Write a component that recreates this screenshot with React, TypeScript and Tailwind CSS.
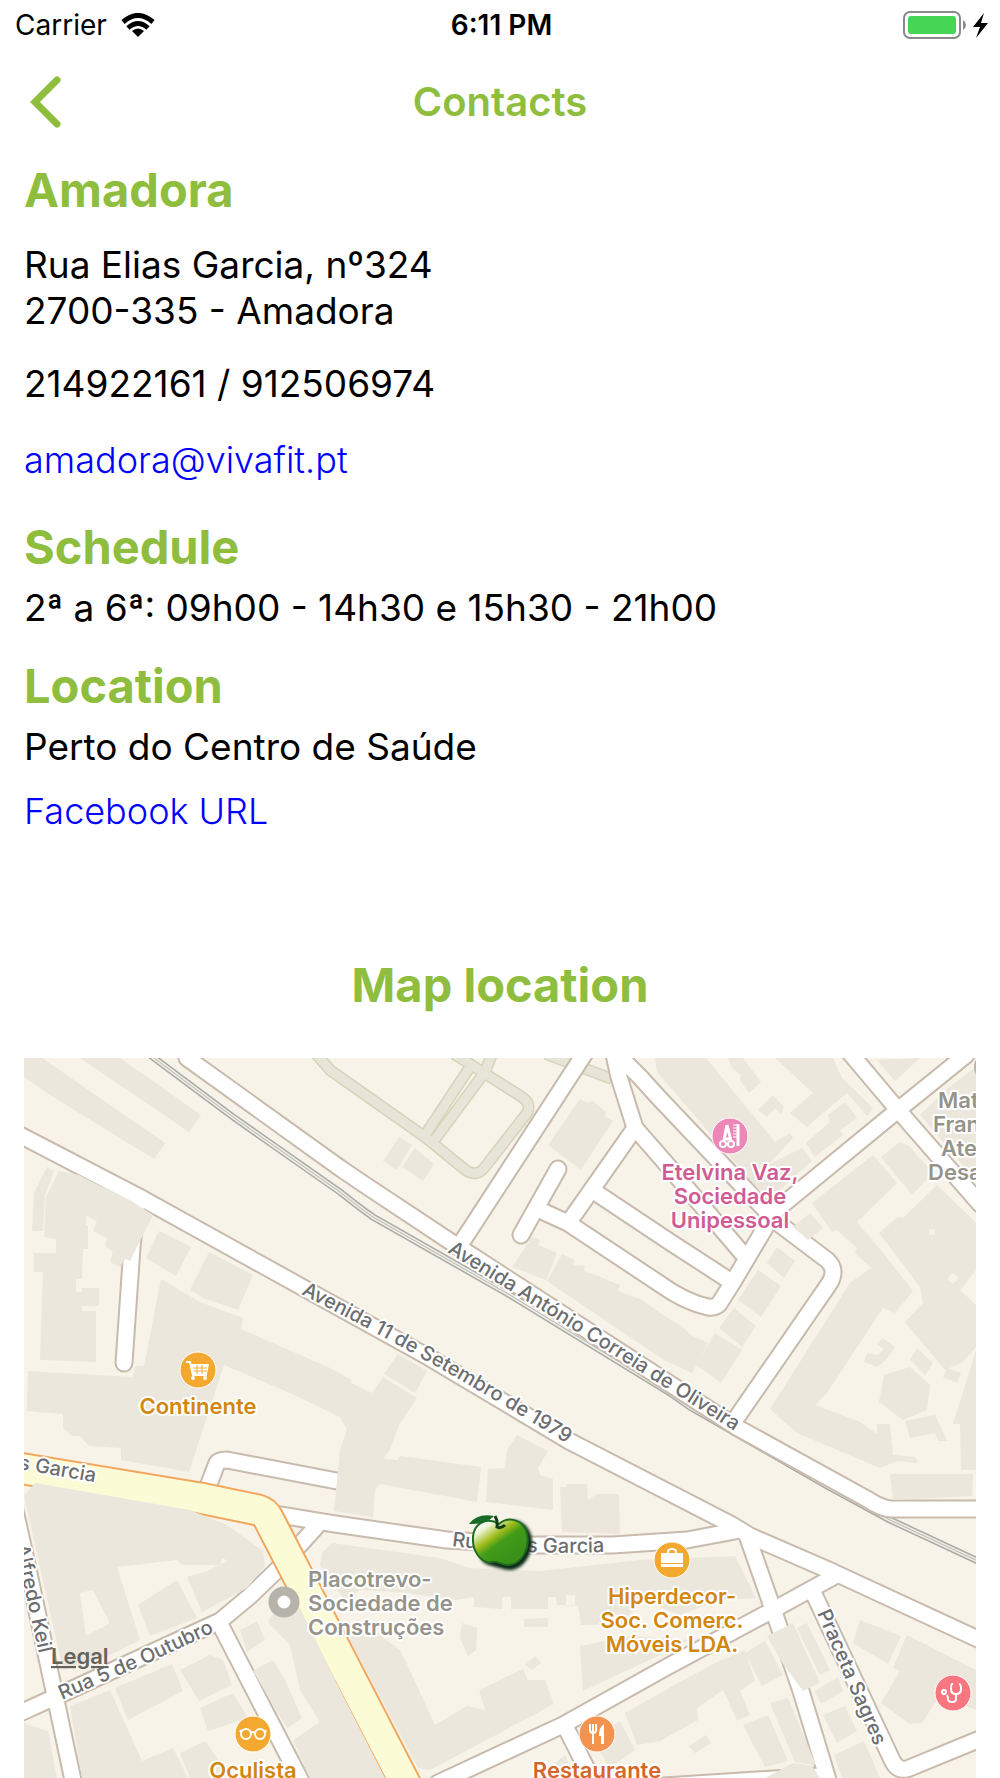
import type { ReactNode } from 'react';

// Centre lines of the streets, in map coordinates
const STREETS = [
  'M187 1058 L340 1168 L365 1185 L454 1244 L738 1428 L867 1499 Q882 1509 892 1509 H980',
  'M20 1135 L143 1199 L300 1286 L430 1358 L569 1441 L732 1525 L750 1536 L833 1572 L980 1640',
  'M585 1053 L460 1245',
  'M613 1050 L619 1077 L635 1128 L663 1160 L742 1253',
  'M613 1050 L640 1077 L660 1099 L770 1215',
  'M966 1055 L898 1110 L775 1211 L733 1282 L719 1304 Q715 1308 708 1307 Q685 1302 660 1284 L568 1223 L544 1212',
  'M558 1169 L521 1235',
  'M635 1128 L569 1222',
  'M598 1194 L670 1242 L727 1279',
  'M850 1053 L898 1110 L980 1204',
  'M770 1217 L827 1260 Q838 1270 829 1284 L735 1420',
  'M137 1200 L132 1247 L124 1363',
  'M209 1484 L217 1463 Q219 1460 227 1460 L342 1482',
  'M280 1515 L335 1524 L447 1540 L530 1545 L613 1545 L687 1540 L735 1531',
  'M316 1527 L277 1570 L250 1596 L220 1621 L53 1698 L20 1713',
  'M15 1510 L25 1555 L57 1705 L74 1785',
  'M222 1628 L302 1783',
  'M438 1783 L563 1725 L665 1668 L773 1610 L835 1576',
  'M565 1726 L594 1783',
  'M748 1538 L775 1615 L801 1691 L829 1783',
  'M664 1786 L820 1776',
  'M812 1590 L892 1760 Q897 1771 907 1769 L980 1739',
];

const PARK_PATHS = [
  'M316 1054 L330 1070 L425 1137 L463 1168 Q476 1179 485 1167 L527 1113 Q532 1104 522 1097 L454 1054',
  'M470 1067 L425 1135',
  'M492 1054 L485 1072 L433 1142',
  'M546 1054 L612 1079',
];

const RAILWAY =
  'M150 1055 L233 1117 L340 1192 Q360 1208 373 1217 L510 1295 L670 1393 L690 1407 L827 1486 L890 1520 L980 1562';

const MAIN_ROAD = 'M18 1468 L200 1498 L258 1510 Q265 1512 268 1518 L406 1785';

const BUILDINGS = [
  '24,1058 42,1058 165,1143 154,1159 50,1095 24,1077',
  '80,1058 120,1058 201,1115 189,1132',
  '47,1167 54,1171 45,1195 43,1231 32,1231 34,1193',
  '59,1171 79,1175 92,1182 130,1200 153,1215 130,1261 125,1259 120,1267 110,1262 113,1252 105,1246 107,1238 93,1231 97,1221 86,1215 86,1225 88,1226 88,1249 83,1249 82,1279 76,1279 76,1292 82,1292 82,1288 99,1288 99,1306 82,1306 82,1311 96,1311 96,1362 40,1360 43,1272 34,1272 34,1253 56,1253 56,1239 44,1237 46,1197',
  '159,1231 191,1247 176,1276 146,1258',
  '209,1252 253,1275 238,1310 203,1298 190,1290',
  '161,1279 200,1302 243,1318 241,1329 330,1368 352,1380 351,1383 372,1393 383,1377 417,1398 399,1425 390,1450 383,1459 398,1460 400,1456 481,1467 477,1502 380,1484 375,1490 373,1517 334,1511 340,1450 347,1430 340,1417 290,1393 224,1365 206,1420 189,1472 121,1460 121,1448 89,1446 80,1436 72,1436 63,1428 63,1414 27,1411 28,1371 133,1377 135,1366 144,1366',
  '398,1354 427,1371 415,1393 384,1374',
  '399,1137 412,1145 397,1170 383,1161',
  '415,1148 434,1164 423,1181 402,1167',
  '580,1099 588,1103 593,1101 606,1112 605,1116 613,1121 581,1170 548,1145',
  '532,1237 540,1240 538,1245 557,1253 546,1280 512,1267',
  '562,1254 575,1260 573,1265 585,1266 584,1271 598,1276 620,1285 618,1291 640,1299 663,1315 680,1325 691,1335 708,1343 692,1373 664,1360 547,1281',
  '655,1058 706,1058 775,1142 790,1133 793,1138 768,1165 802,1148 812,1161 768,1201 657,1072',
  '728,1058 743,1058 761,1082 749,1093 740,1080 741,1075 732,1068',
  '773,1095 784,1107 781,1114 775,1108 767,1117 758,1110',
  '775,1058 833,1058 842,1078 873,1108 867,1116 847,1093 817,1118 807,1127 790,1113 813,1093',
  '845,1102 857,1118 840,1130 843,1135 815,1157 806,1143 830,1122 828,1115',
  '877,1060 920,1058 895,1081',
  '976,1067 976,1180 950,1150 920,1115 948,1088',
  '881,1157 900,1142 910,1147 933,1173 912,1195',
  '812,1203 873,1155 897,1183 857,1222 888,1259 913,1291 895,1313 883,1308 827,1393 815,1405 860,1422 877,1434 877,1424 890,1424 893,1455 915,1457 918,1463 897,1461 880,1468 797,1433 770,1409 850,1283 871,1268 855,1253 857,1248 837,1230 832,1232',
  '879,1233 898,1217 903,1218 937,1185 976,1223 976,1270 960,1290 976,1305 976,1347 963,1362 945,1370 905,1322 923,1303 920,1287',
  '777,1247 795,1261 784,1278 767,1263',
  '758,1270 781,1286 761,1317 738,1300',
  '734,1308 756,1326 742,1347 719,1328',
  '715,1333 742,1350 721,1383 696,1365',
  '810,1213 823,1228 808,1240 793,1227',
  '884,1375 910,1367 930,1385 927,1410 903,1420 879,1402',
  '917,1348 933,1363 925,1375 910,1360',
  '882,1338 895,1347 886,1360 877,1367 864,1362 867,1353 878,1355 884,1349 877,1344',
  '976,1350 976,1470 961,1470 960,1424 953,1424',
  '905,1421 935,1415 947,1441 938,1441 935,1433 910,1438',
  '947,1368 961,1373 957,1383 943,1377',
  '890,1474 973,1474 972,1496 893,1500',
  '507,1450 517,1435 548,1451 538,1468 540,1475 553,1479 553,1510 486,1502 488,1469 505,1468',
  '560,1487 566,1487 567,1484 587,1484 588,1500 597,1494 619,1494 620,1534 562,1532',
  '322,1553 332,1543 440,1558 470,1568 540,1571 640,1560 735,1556 756,1598 720,1600 680,1615 643,1600 620,1625 581,1625 578,1606 557,1605 556,1597 548,1597 548,1609 511,1609 511,1597 502,1597 502,1609 474,1607 474,1597 455,1600 400,1592 360,1590 345,1600 320,1566',
  '462,1623 477,1628 476,1650 468,1656 460,1638',
  '524,1619 548,1618 548,1627 524,1627',
  '525,1665 535,1656 541,1663 532,1670',
  '580,1646 630,1636 690,1640 660,1655 583,1691',
  '350,1640 358,1620 400,1650 412,1675 435,1725 467,1706 485,1710 479,1690 523,1669 528,1680 545,1680 554,1704 430,1770 418,1768',
  '537,1778 565,1755 575,1778',
  '625,1713 678,1683 715,1663 745,1650 755,1681 740,1691 750,1715 737,1720 723,1690 697,1708 698,1720 660,1741 637,1745',
  '620,1721 635,1750 610,1768 592,1740',
  '765,1641 783,1675 762,1686 745,1653',
  '767,1636 793,1623 820,1683 803,1691 783,1664',
  '807,1623 830,1670 820,1675 797,1628',
  '838,1677 843,1691 821,1704 815,1691',
  '845,1706 857,1731 837,1743 823,1715',
  '864,1741 880,1778 842,1778 834,1755',
  '860,1620 901,1636 888,1664 853,1643',
  '907,1635 976,1670 976,1710 940,1695 922,1723 910,1724 881,1703 900,1671 893,1668',
  '770,1703 788,1698 816,1765 795,1762',
  '743,1725 768,1715 788,1761 765,1767',
  '689,1746 706,1735 711,1743 695,1753',
  '765,1778 793,1763 812,1766 820,1778',
  '35,1483 190,1510 227,1525 263,1551 265,1566 247,1588 202,1612 187,1577 190,1576 205,1572 228,1561 222,1558 220,1565 182,1565 177,1560 117,1567 140,1640 110,1655 63,1670 24,1496',
  '138,1605 177,1580 197,1618 150,1636',
  '70,1706 110,1690 142,1761 173,1748 188,1778 82,1778',
  '115,1688 172,1664 183,1691 128,1720',
  '180,1670 210,1655 223,1660 232,1685 199,1701',
  '200,1708 233,1693 248,1718 208,1731',
  '24,1723 48,1731 57,1778 24,1778',
  '180,1753 205,1741 217,1758 225,1778 190,1778',
  '240,1630 257,1621 265,1640 247,1652',
  '268,1622 280,1602 300,1608 340,1690 385,1778 310,1778 293,1740 320,1722 300,1690 290,1645',
  '253,1671 273,1660 285,1680 302,1718 287,1728 270,1700',
];

interface PoiProps {
  x: number;
  y: number;
  color: string;
  textColor: string;
  lines: string[];
  children: ReactNode;
}

function Poi({ x, y, color, textColor, lines, children }: PoiProps) {
  return (
    <g>
      <circle cx={x} cy={y} r={18} fill={color} stroke="#fff" />
      <g transform={`translate(${x} ${y})`}>{children}</g>
      {lines.map((line, i) => (
        <MapLabel key={line} x={x} y={y + 44 + i * 24} anchor="middle" color={textColor}>
          {line}
        </MapLabel>
      ))}
    </g>
  );
}

interface MapLabelProps {
  x: number;
  y: number;
  color: string;
  anchor?: 'start' | 'middle';
  children: string;
}

function MapLabel({ x, y, color, anchor = 'start', children }: MapLabelProps) {
  return (
    <text
      x={x}
      y={y}
      textAnchor={anchor}
      fill={color}
      stroke="#fff"
      strokeWidth={4}
      strokeLinejoin="round"
      paintOrder="stroke"
      className="text-[22px] font-semibold"
    >
      {children}
    </text>
  );
}

function StreetName({ id, d, children }: { id: string; d: string; children: string }) {
  return (
    <>
      <path id={id} d={d} fill="none" />
      <text
        fill="#6c6d70"
        stroke="#fff"
        strokeWidth={4}
        strokeLinejoin="round"
        paintOrder="stroke"
        className="text-[20px] font-medium"
      >
        <textPath href={`#${id}`}>{children}</textPath>
      </text>
    </>
  );
}

function ApplePin() {
  return (
    <g>
      <path
        d="M503 1523 C520 1514 534 1529 532 1545 C530 1561 518 1574 503 1569 C490 1565 484 1566 480 1557 Z"
        fill="#0c2a17"
        filter="url(#pin-shadow)"
      />
      <path
        d="M499 1524 C507 1517 520 1518 526 1530 C532 1548 521 1564 509 1565 C502 1566 497 1560 492 1562 C481 1564 472 1551 473 1537 C474 1522 488 1517 499 1524 Z"
        fill="url(#apple-skin)"
        stroke="#1d6b1f"
        strokeWidth={2}
      />
      <path d="M469 1524 Q477 1513 494 1516 Q486 1525 469 1524 Z" fill="#166b26" />
      <path d="M495 1516 Q498 1521 497 1527 Q501 1529 505 1525" fill="none" stroke="#123d18" strokeWidth={3} />
    </g>
  );
}

function LocationMap() {
  return (
    <svg
      viewBox="24 1058 952 720"
      role="img"
      aria-label="Map location"
      className="mt-[45px] block w-full overflow-hidden bg-[#f7f3e8]"
    >
      <defs>
        <linearGradient id="apple-skin" x1="0.1" y1="0.1" x2="0.7" y2="0.8">
          <stop offset="0" stopColor="#fff" />
          <stop offset="0.15" stopColor="#eef6d8" />
          <stop offset="0.42" stopColor="#a0bd1c" />
          <stop offset="0.62" stopColor="#429b18" />
          <stop offset="1" stopColor="#3a9218" />
        </linearGradient>
        <filter id="pin-shadow" x="-20%" y="-20%" width="140%" height="140%">
          <feGaussianBlur stdDeviation="1.4" />
        </filter>
      </defs>

      {/* Park paths */}
      <g fill="none" strokeLinejoin="round">
        {PARK_PATHS.map((d) => (
          <path key={d} d={d} stroke="#d5d3b9" strokeWidth={12} />
        ))}
        {PARK_PATHS.map((d) => (
          <path key={d} d={d} stroke="#e6e5d7" strokeWidth={9} />
        ))}
      </g>

      {/* Railway */}
      <g fill="none">
        <path d={RAILWAY} stroke="#a9a9a8" strokeWidth={7} />
        <path d={RAILWAY} stroke="#efeee2" strokeWidth={4} />
        <path d={RAILWAY} stroke="#b5b5b2" strokeWidth={1} />
      </g>

      {/* Streets: casing first, so that the junctions stay open */}
      <g fill="none" strokeLinecap="round" strokeLinejoin="round">
        {STREETS.map((d) => (
          <path key={d} d={d} stroke="#c8bbad" strokeWidth={19} />
        ))}
        {STREETS.map((d) => (
          <path key={d} d={d} stroke="#fff" strokeWidth={15} />
        ))}
        <path d={MAIN_ROAD} stroke="#f2a75e" strokeWidth={33} />
        <path d={MAIN_ROAD} stroke="#fbfbd6" strokeWidth={29} />
      </g>

      {/* Buildings */}
      <g fill="#ebe7dc">
        {BUILDINGS.map((points) => (
          <polygon key={points} points={points} />
        ))}
      </g>
      <g fill="#f7f3e8">
        <polygon points="80,1593 93,1590 110,1623 86,1636" />
        <polygon points="953,1273 959,1278 953,1284 947,1279" />
        <circle cx={932} cy={1232} r={3} />
        <rect x={566} y={1595} width={9} height={10} />
      </g>

      {/* Street names */}
      <StreetName id="street-correia" d="M447 1252 L583 1336 L760 1447">
        Avenida António Correia de Oliveira
      </StreetName>
      <StreetName id="street-setembro" d="M301 1294 Q433 1360 600 1464">
        Avenida 11 de Setembro de 1979
      </StreetName>
      <StreetName id="street-garcia" d="M452 1546 Q530 1556 630 1551">
        Rua Elias Garcia
      </StreetName>
      <StreetName id="street-garcia-west" d="M-56 1457 L24 1470 L140 1490">
        Rua Elias Garcia
      </StreetName>
      <StreetName id="street-outubro" d="M62 1700 L148 1663 L240 1620">
        Rua 5 de Outubro
      </StreetName>
      <StreetName id="street-keil" d="M6 1505 L52 1712">
        Rua Alfredo Keil
      </StreetName>
      <StreetName id="street-sagres" d="M817 1613 L890 1782">
        Praceta Sagres
      </StreetName>

      {/* Places */}
      <Poi x={198} y={1370} color="#f3a92f" textColor="#d18710" lines={['Continente']}>
        <path d="M-12 -8 H-8 L-5 5 H9" fill="none" stroke="#fff" strokeWidth={2} />
        <path d="M-7 -6 H11 L9 4 H-5 Z" fill="#fff" />
        <path d="M-5 -2 H9 M-4 1 H9 M-1 -5 V4 M4 -5 V4" stroke="#f3a92f" strokeWidth={1} />
        <circle cx={-5} cy={8} r={2} fill="#fff" />
        <circle cx={7} cy={8} r={2} fill="#fff" />
      </Poi>
      <Poi
        x={730}
        y={1136}
        color="#ec87b7"
        textColor="#cf5c92"
        lines={['Etelvina Vaz,', 'Sociedade', 'Unipessoal']}
      >
        <path d="M-3 -11 L-6 4 M-3 -11 L1 5 M-6 3 H0" stroke="#fff" strokeWidth={3} fill="none" />
        <g fill="none" stroke="#fff" strokeWidth={2}>
          <circle cx={-7} cy={8} r={3} />
          <circle cx={1} cy={8} r={3} />
          <path d="M8 -12 V10" strokeWidth={3} />
          <path d="M3 -11 H8 M3 -8 H8 M3 -5 H8 M3 -2 H8 M3 1 H8" strokeWidth={1} />
        </g>
      </Poi>
      <Poi
        x={672}
        y={1560}
        color="#f3a92f"
        textColor="#d18710"
        lines={['Hiperdecor-', 'Soc. Comerc.', 'Móveis LDA.']}
      >
        <rect x={-11} y={-7} width={22} height={10} fill="#fff" />
        <rect x={-11} y={4} width={22} height={3} fill="#fff" />
        <path d="M-4 -7 V-8 Q-4 -11 0 -11 Q4 -11 4 -8 V-7" fill="none" stroke="#fff" strokeWidth={2} />
      </Poi>
      <Poi x={253} y={1734} color="#f3a92f" textColor="#d18710" lines={['Oculista']}>
        <g fill="none" stroke="#fff" strokeWidth={2}>
          <circle cx={-7} cy={0} r={5} />
          <circle cx={7} cy={0} r={5} />
          <path d="M-2 -1 Q0 -3 2 -1 M-13 -2 L-12 -4 M13 -2 L12 -4" />
        </g>
      </Poi>
      <Poi x={597} y={1734} color="#f4924f" textColor="#d4672c" lines={['Restaurante']}>
        <path d="M-7 -10 V-4 Q-7 -1 -4 -1 Q-1 -1 -1 -4 V-10 M-4 -10 V10" fill="none" stroke="#fff" strokeWidth={2} />
        <path d="M7 -10 Q2 -7 2 2 H4 V10 H7 Z" fill="#fff" />
      </Poi>
      <Poi x={953} y={1693} color="#f7767f" textColor="#d4505a" lines={[]}>
        <g fill="none" stroke="#fff" strokeWidth={2}>
          <path d="M0 -9 H-1 Q-2 -9 -2 -4 Q-2 1 3 1 Q8 1 8 -4 Q8 -9 6 -9 M3 1 V6 Q3 9 -1 9 Q-5 9 -5 6 Q-5 4 -6 2" />
          <circle cx={-9} cy={-1} r={2} />
        </g>
      </Poi>

      <circle cx={284} cy={1602} r={11} fill="#fff" stroke="#b6b3aa" strokeWidth={9} />
      <MapLabel x={308} y={1587} color="#96938b">Placotrevo-</MapLabel>
      <MapLabel x={308} y={1611} color="#96938b">Sociedade de</MapLabel>
      <MapLabel x={308} y={1635} color="#96938b">Construções</MapLabel>

      <circle cx={990} cy={1067} r={16} fill="#b6b3aa" />
      <MapLabel x={938} y={1108} color="#96938b">Mat</MapLabel>
      <MapLabel x={933} y={1132} color="#96938b">Fran</MapLabel>
      <MapLabel x={941} y={1156} color="#96938b">Ate</MapLabel>
      <MapLabel x={928} y={1180} color="#96938b">Desa</MapLabel>

      <a href="#legal">
        <text x={51} y={1664} fill="#65635e" className="text-[22px] font-semibold underline">
          Legal
        </text>
      </a>

      <ApplePin />
    </svg>
  );
}

function StatusBar() {
  return (
    <div className="grid h-[50px] grid-cols-3 items-center pl-[15px] pr-3 text-[28px] text-black">
      <div className="flex items-center gap-[14px]">
        <span>Carrier</span>
        <svg width="34" height="25" viewBox="0 0 34 25" className="block" aria-hidden="true">
          <g fill="none" stroke="#000" strokeWidth={5}>
            <path d="M2 9 Q17 -4 32 9" />
            <path d="M7 15 Q17 6 27 15" />
          </g>
          <path d="M17 24 L11 18 Q17 13 23 18 Z" />
        </svg>
      </div>
      <div className="text-center font-semibold">6:11 PM</div>
      <svg width="86" height="28" viewBox="0 0 86 28" className="block justify-self-end" aria-hidden="true">
        <rect x={2} y={1} width={56} height={26} rx={6} fill="none" stroke="#8a8a8c" strokeWidth={2} />
        <rect x={6} y={5} width={48} height={18} rx={3} fill="#45d754" />
        <path d="M61 9 Q64 11 64 14 Q64 17 61 19 Z" fill="#8a8a8c" />
        <path d="M82 2 L71 16 H78 L74 27 L86 12 H79 Z" fill="#000" />
      </svg>
    </div>
  );
}

function SectionTitle({ children }: { children: string }) {
  return <h2 className="text-[47px] font-bold leading-[56px] text-[#8fbe3f]">{children}</h2>;
}

export default function App() {
  return (
    <div className="min-h-screen overflow-hidden bg-white font-['Inter',sans-serif] text-black">
      <StatusBar />

      {/* Navigation */}
      <header className="grid h-[104px] grid-cols-3 items-center px-[25px]">
        <button type="button" aria-label="Back" className="justify-self-start">
          <svg width="40" height="52" viewBox="0 0 40 52" className="block" aria-hidden="true">
            <path
              d="M32 4 L10 26 L32 48"
              fill="none"
              stroke="#8fbe3f"
              strokeWidth={7}
              strokeLinecap="round"
            />
          </svg>
        </button>
        <h1 className="text-center text-[40px] font-semibold text-[#8fbe3f]">Contacts</h1>
      </header>

      <main className="px-6 pt-2 text-[37px] leading-[46px]">
        <SectionTitle>Amadora</SectionTitle>
        <address className="mt-6 not-italic">
          <p>
            Rua Elias Garcia, nº324
            <br />
            2700-335 - Amadora
          </p>
          <p className="mt-[27px]">214922161 / 912506974</p>
          <a href="mailto:amadora@vivafit.pt" className="mt-[30px] block text-[36px] font-light text-[#0000ff]">
            amadora@vivafit.pt
          </a>
        </address>

        <div className="mt-9">
          <SectionTitle>Schedule</SectionTitle>
          <p className="mt-[10px]">2ª a 6ª: 09h00 - 14h30 e 15h30 - 21h00</p>
        </div>

        <div className="mt-[27px]">
          <SectionTitle>Location</SectionTitle>
          <p className="mt-[10px]">Perto do Centro de Saúde</p>
          <a href="#facebook" className="mt-[18px] block text-[36px] font-light text-[#0000ff]">
            Facebook URL
          </a>
        </div>

        <div className="mt-[123px] text-center">
          <SectionTitle>Map location</SectionTitle>
          <LocationMap />
        </div>
      </main>
    </div>
  );
}
